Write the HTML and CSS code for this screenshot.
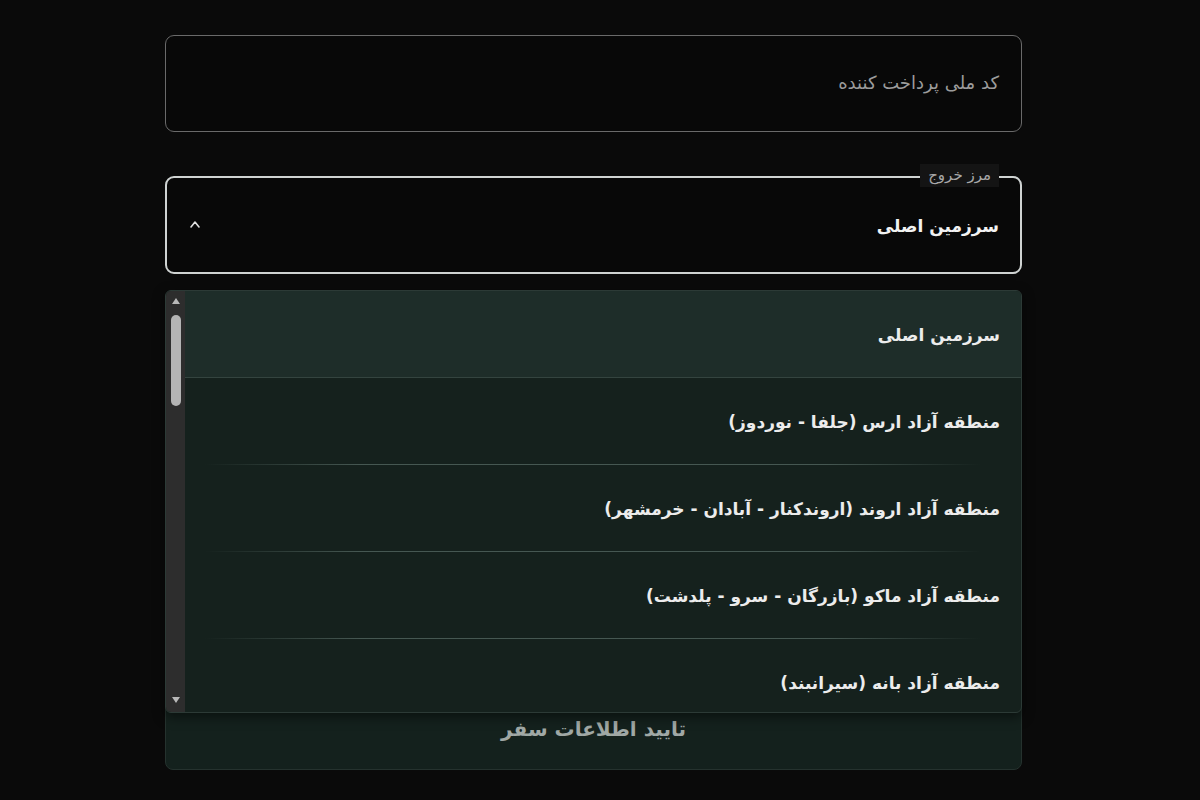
FILE: index.html
```html
<!DOCTYPE html>
<html lang="fa" dir="rtl">
<head>
<meta charset="utf-8">
<title>فرم سفر</title>
<link rel="stylesheet" href="styles.css">
</head>
<body>
<div class="page">
  <div class="form">
    <div class="field">
      <span class="placeholder">کد ملی پرداخت کننده</span>
    </div>
    <div class="select-wrap">
      <div class="select">
        <span class="legend">مرز خروج</span>
        <span class="value">سرزمین اصلی</span>
        <svg class="chev" width="12" height="8" viewBox="0 0 12 8"><path d="M2 7 L6 2 L10 7" fill="none" stroke="#e0e0e0" stroke-width="1.6" stroke-linecap="round" stroke-linejoin="round"/></svg>
      </div>
      <div class="menu">
        <div class="scrollbar">
          <svg class="arrow" width="10" height="8" viewBox="0 0 10 8"><path d="M1 7 L5 1 L9 7 Z" fill="#b8b8b8"/></svg>
          <div class="track"><div class="thumb"></div></div>
          <svg class="arrow" width="10" height="8" viewBox="0 0 10 8"><path d="M1 1 L5 7 L9 1 Z" fill="#b8b8b8"/></svg>
        </div>
        <div class="options">
          <div class="option selected">سرزمین اصلی</div>
          <div class="option">منطقه آزاد ارس (جلفا - نوردوز)</div>
          <div class="option">منطقه آزاد اروند (اروندکنار - آبادان - خرمشهر)</div>
          <div class="option">منطقه آزاد ماکو (بازرگان - سرو - پلدشت)</div>
          <div class="option">منطقه آزاد بانه (سیرانبند)</div>
        </div>
      </div>
    </div>
    <div class="button">تایید اطلاعات سفر</div>
  </div>
</div>
</body>
</html>
```

FILE: styles.css
```css
* { box-sizing: border-box; }
html, body {
  margin: 0;
  padding: 0;
  background: #0a0a0a;
  width: 1200px;
  height: 800px;
  overflow: hidden;
  font-family: "DejaVu Sans", "Noto Sans", sans-serif;
}
.page {
  padding-top: 35px;
  padding-right: 178px;
}
.form {
  width: 857px;
  display: flex;
  flex-direction: column;
}
.field {
  height: 97px;
  border: 1px solid #6a6a6a;
  border-radius: 9px;
  background: #080808;
  display: flex;
  align-items: center;
  padding: 0 22px;
}
.placeholder {
  color: #9c9c9c;
  font-size: 18px;
  margin-top: -2px;
}
.select-wrap {
  position: relative;
  margin-top: 44px;
}
.select {
  position: relative;
  height: 98px;
  border: 2px solid #cfd3d2;
  border-radius: 9px;
  background: #080808;
  display: flex;
  align-items: center;
  justify-content: space-between;
  padding: 0 21px 0 24px;
}
.legend {
  position: absolute;
  top: -14px;
  right: 21px;
  padding: 2px 8px 3px;
  background: #141414;
  color: #a8a8a8;
  font-size: 15px;
}
.value {
  color: #f2f2f2;
  font-size: 17px;
  font-weight: bold;
  margin-top: 2px;
}
.chev { display: block; margin-top: -2px; margin-left: -2px; }
.menu {
  position: absolute;
  top: 114px;
  left: 0;
  right: 0;
  height: 423px;
  background: #15211d;
  border: 1px solid #2c3a36;
  border-radius: 6px;
  display: flex;
  flex-direction: row-reverse;
  overflow: hidden;
  z-index: 2;
  box-shadow: 0 4px 12px rgba(0,0,0,0.5);
}
.scrollbar {
  width: 19px;
  background: #2d2d2d;
  display: flex;
  flex-direction: column;
  align-items: center;
  padding: 6px 0 8px;
  flex-shrink: 0;
}
.arrow { display: block; }
.track {
  flex: 1;
  width: 100%;
  padding: 10px 4px 0;
}
.thumb {
  width: 10px;
  height: 91px;
  margin: 0 auto;
  background: #b4b4b4;
  border-radius: 5px;
}
.options {
  flex: 1;
  display: flex;
  flex-direction: column;
}
.option {
  position: relative;
  flex-shrink: 0;
  height: 87px;
  display: flex;
  align-items: center;
  padding: 0 21px;
  color: #ececec;
  font-size: 17px;
  font-weight: bold;
}
.option::after {
  content: "";
  position: absolute;
  left: 20px;
  right: 40px;
  bottom: 0;
  height: 1px;
  background: linear-gradient(to left, rgba(90,110,104,0), rgba(90,110,104,0.7) 20%, rgba(90,110,104,0.7) 80%, rgba(90,110,104,0));
}
.option.selected {
  background: #1e2d29;
}
.option.selected::after {
  left: 0;
  right: 0;
  background: #34443f;
}
.button {
  margin-top: 416px;
  height: 80px;
  background: #14211d;
  border: 1px solid #25322e;
  border-radius: 8px;
  display: flex;
  align-items: center;
  justify-content: center;
  padding-bottom: 2px;
  color: #a0a8a5;
  font-size: 20px;
  font-weight: bold;
}
```
